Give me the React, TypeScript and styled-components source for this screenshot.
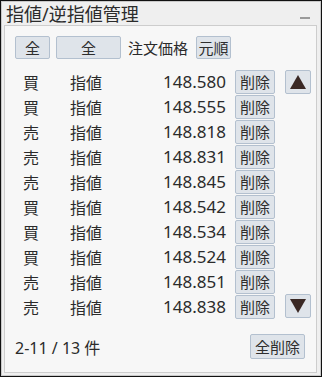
import styled, { createGlobalStyle } from "styled-components";

const GlobalStyle = createGlobalStyle`
  html, body {
    margin: 0;
    padding: 0;
    background: #ffffff;
  }
  body {
    font-family: "Noto Sans", "Noto Sans CJK JP", sans-serif;
  }
`;

const Window = styled.div`
  width: 322px;
  height: 377px;
  box-sizing: border-box;
  border: 1px solid #111;
  box-shadow: inset 0 0 0 1px #c9c9c9;
  background: #efefef;
  padding: 0 4px 3px 3px;
  display: flex;
  flex-direction: column;
`;

const TitleBar = styled.div`
  height: 24px;
  display: flex;
  align-items: center;
  justify-content: space-between;
  padding: 0 4px 0 2px;
`;

const Title = styled.div`
  font-family: "Noto Sans", "Noto Sans CJK JP", sans-serif;
  font-size: 18px;
  color: #2b2b2b;
  line-height: 24px;
  margin-top: 2px;
`;

const Minimize = styled.div`
  width: 10px;
  height: 2px;
  background: #9a9a9a;
  margin-top: 10px;
  margin-right: 3px;
`;

const Panel = styled.div`
  flex: 1;
  border: 1px solid #cdcdcd;
  background: #f7f7f7;
  padding: 10px 5px 0 10px;
  display: flex;
  flex-direction: column;
`;

const Toolbar = styled.div`
  display: flex;
  align-items: center;
  gap: 6px;
  height: 23px;
`;

const Button = styled.button<{ $w: number; $h?: number }>`
  width: ${(p) => p.$w}px;
  height: ${(p) => p.$h ?? 23}px;
  box-sizing: border-box;
  border: 1px solid #b3c0cf;
  border-radius: 2px;
  background: #dfe4ea;
  color: #2e2e2e;
  font-family: "Noto Sans CJK JP", sans-serif;
  font-size: 15px;
  line-height: 1;
  padding: 0;
  display: flex;
  align-items: center;
  justify-content: center;
`;

const Label = styled.span`
  font-family: "Noto Sans CJK JP", sans-serif;
  font-size: 15px;
  color: #2b2b2b;
  margin: 0 2px 0 1px;
`;

const Body = styled.div`
  display: grid;
  grid-template-columns: 1fr 26px;
  column-gap: 10px;
  margin-top: 10px;
`;

const List = styled.div`
  display: flex;
  flex-direction: column;
`;

const Row = styled.div`
  display: grid;
  grid-template-columns: 55px 60px 1fr 40px;
  align-items: center;
  height: 25px;
  color: #2b2b2b;
`;

const Side = styled.span`
  padding-left: 8px;
  font-family: "Noto Sans CJK JP", sans-serif;
  font-size: 16px;
`;

const Kind = styled.span`
  font-family: "Noto Sans CJK JP", sans-serif;
  font-size: 16px;
`;

const Price = styled.span`
  text-align: right;
  padding-right: 9px;
  font-family: "Noto Sans", sans-serif;
  font-size: 17px;
`;

const Arrows = styled.div`
  display: flex;
  flex-direction: column;
  justify-content: space-between;
  padding: 1px 0;
`;

const ArrowButton = styled.button`
  width: 26px;
  height: 24px;
  box-sizing: border-box;
  border: 1px solid #b3c0cf;
  border-radius: 2px;
  background: #dfe4ea;
  padding: 0;
  display: flex;
  align-items: center;
  justify-content: center;
`;

const Footer = styled.div`
  display: flex;
  align-items: center;
  justify-content: space-between;
  margin-top: 15px;
  padding-right: 6px;
`;

const Count = styled.span`
  font-family: "Noto Sans", "Noto Sans CJK JP", sans-serif;
  font-size: 16px;
  color: #2b2b2b;
`;

const orders = [
  { side: "買", price: "148.580" },
  { side: "買", price: "148.555" },
  { side: "売", price: "148.818" },
  { side: "売", price: "148.831" },
  { side: "売", price: "148.845" },
  { side: "買", price: "148.542" },
  { side: "買", price: "148.534" },
  { side: "買", price: "148.524" },
  { side: "売", price: "148.851" },
  { side: "売", price: "148.838" },
];

function Triangle({ up }: { up?: boolean }) {
  return (
    <svg width="16" height="14" viewBox="0 0 16 14">
      <path d={up ? "M8 0 L16 14 L0 14 Z" : "M0 0 L16 0 L8 14 Z"} fill="#3a2824" />
    </svg>
  );
}

export default function App() {
  return (
    <>
      <GlobalStyle />
      <Window>
        <TitleBar>
          <Title>指値/逆指値管理</Title>
          <Minimize />
        </TitleBar>
        <Panel>
          <Toolbar>
            <Button $w={35}>全</Button>
            <Button $w={65}>全</Button>
            <Label>注文価格</Label>
            <Button $w={35}>元順</Button>
          </Toolbar>
          <Body>
            <List>
              {orders.map((o, i) => (
                <Row key={i}>
                  <Side>{o.side}</Side>
                  <Kind>指値</Kind>
                  <Price>{o.price}</Price>
                  <Button $w={40} $h={24}>
                    削除
                  </Button>
                </Row>
              ))}
            </List>
            <Arrows>
              <ArrowButton>
                <Triangle up />
              </ArrowButton>
              <ArrowButton>
                <Triangle />
              </ArrowButton>
            </Arrows>
          </Body>
          <Footer>
            <Count>2-11 / 13 件</Count>
            <Button $w={55} $h={25}>
              全削除
            </Button>
          </Footer>
        </Panel>
      </Window>
    </>
  );
}
